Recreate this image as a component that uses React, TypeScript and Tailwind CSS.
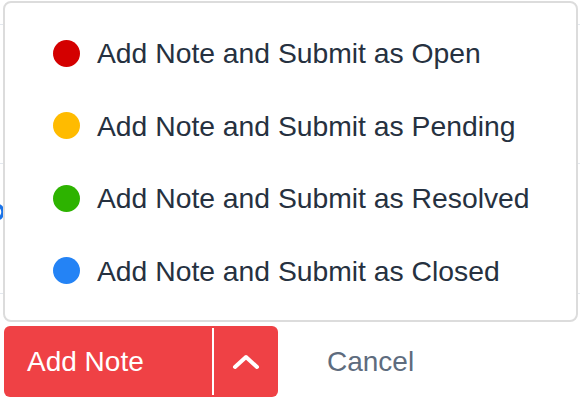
import { useState } from "react";

const options = [
  { label: "Open", color: "bg-[#d40000]" },
  { label: "Pending", color: "bg-[#ffbb00]" },
  { label: "Resolved", color: "bg-[#2db300]" },
  { label: "Closed", color: "bg-[#2483f5]" },
];

export default function App() {
  const [open, setOpen] = useState(true);

  return (
    <div
      className="relative h-[404px] w-[580px] overflow-hidden bg-white"
      style={{ fontFamily: '"Liberation Sans", Arial, sans-serif' }}
    >
      {/* list rows behind the menu */}
      <div className="h-[25px] border-b border-[#e3e8ee]" />
      <div className="h-[139px] border-b border-[#e3e8ee]" />
      <div className="relative h-[130px] border-b border-[#e3e8ee]">
        <svg
          className="absolute left-[-14px] top-[38px]"
          width="20"
          height="20"
          viewBox="0 0 20 20"
          fill="none"
        >
          <circle cx="10" cy="10" r="7" stroke="#1a73e8" strokeWidth="3.5" />
        </svg>
      </div>

      <div className="mt-[32px] flex items-center pl-[4px]">
        <div className="flex h-[71px] w-[274px] items-stretch rounded-md bg-[#ef4145] text-white">
          <button className="flex flex-1 items-center pl-[23px] text-[28px]">
            Add Note
          </button>
          <div className="my-[2px] w-[2px] bg-white" />
          <button
            onClick={() => setOpen(!open)}
            className="flex w-[64px] items-center justify-center"
          >
            <svg width="28" height="16" viewBox="0 0 28 16" fill="none">
              <path
                d="M3 13 L14 3 L25 13"
                stroke="white"
                strokeWidth="4"
                strokeLinecap="round"
                strokeLinejoin="round"
              />
            </svg>
          </button>
        </div>
        <button className="ml-[49px] text-[28px] text-[#5e6c7e]">Cancel</button>
      </div>

      {open && (
        <div className="absolute left-[3px] top-[1px] h-[321px] w-[575px] rounded-lg border-2 border-[#dcdcdc] bg-white pt-[14px]">
          {options.map((o) => (
            <div
              key={o.label}
              className="flex h-[72.5px] items-center pl-[48px] text-[28.3px] text-[#263140]"
            >
              <span className={`h-[27px] w-[27px] rounded-full ${o.color}`} />
              <span className="ml-[17px]">Add Note and Submit as {o.label}</span>
            </div>
          ))}
        </div>
      )}
    </div>
  );
}
